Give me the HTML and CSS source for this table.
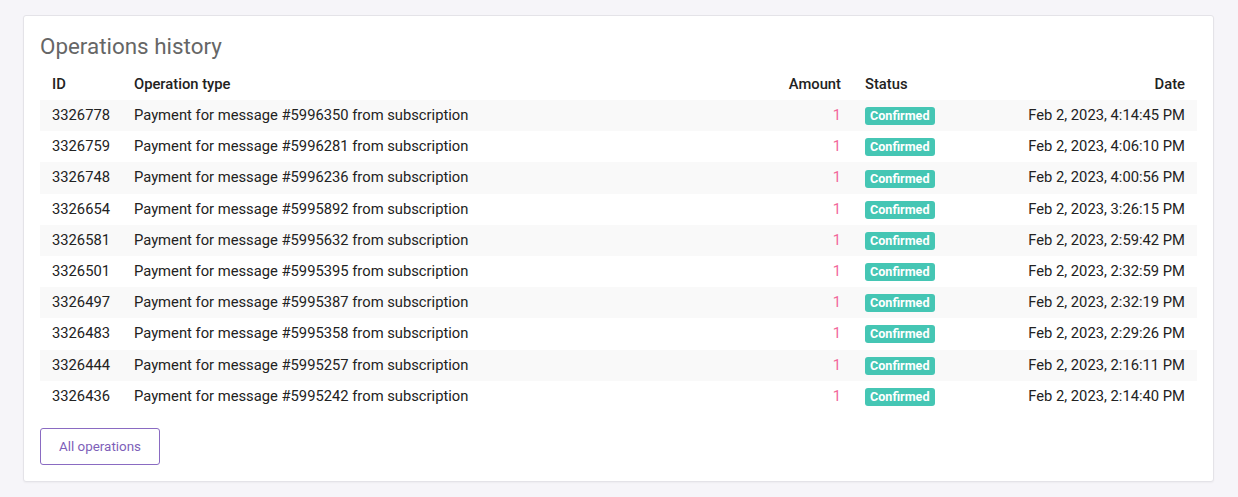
FILE: index.html
```html
<!DOCTYPE html>
<html lang="en">
<head>
<meta charset="utf-8">
<title>Operations history</title>
<link rel="stylesheet" href="styles.css">
</head>
<body>
<div class="card">
  <h2 class="card-title">Operations history</h2>
  <table class="ops">
    <colgroup>
      <col class="c-id"><col class="c-type"><col class="c-amount"><col class="c-status"><col class="c-date">
    </colgroup>
    <thead>
      <tr><th>ID</th><th>Operation type</th><th class="right">Amount</th><th>Status</th><th class="right">Date</th></tr>
    </thead>
    <tbody>
      <tr><td>3326778</td><td>Payment for message #5996350 from subscription</td><td class="right amount">1</td><td><span class="badge">Confirmed</span></td><td class="right">Feb 2, 2023, 4:14:45 PM</td></tr>
      <tr><td>3326759</td><td>Payment for message #5996281 from subscription</td><td class="right amount">1</td><td><span class="badge">Confirmed</span></td><td class="right">Feb 2, 2023, 4:06:10 PM</td></tr>
      <tr><td>3326748</td><td>Payment for message #5996236 from subscription</td><td class="right amount">1</td><td><span class="badge">Confirmed</span></td><td class="right">Feb 2, 2023, 4:00:56 PM</td></tr>
      <tr><td>3326654</td><td>Payment for message #5995892 from subscription</td><td class="right amount">1</td><td><span class="badge">Confirmed</span></td><td class="right">Feb 2, 2023, 3:26:15 PM</td></tr>
      <tr><td>3326581</td><td>Payment for message #5995632 from subscription</td><td class="right amount">1</td><td><span class="badge">Confirmed</span></td><td class="right">Feb 2, 2023, 2:59:42 PM</td></tr>
      <tr><td>3326501</td><td>Payment for message #5995395 from subscription</td><td class="right amount">1</td><td><span class="badge">Confirmed</span></td><td class="right">Feb 2, 2023, 2:32:59 PM</td></tr>
      <tr><td>3326497</td><td>Payment for message #5995387 from subscription</td><td class="right amount">1</td><td><span class="badge">Confirmed</span></td><td class="right">Feb 2, 2023, 2:32:19 PM</td></tr>
      <tr><td>3326483</td><td>Payment for message #5995358 from subscription</td><td class="right amount">1</td><td><span class="badge">Confirmed</span></td><td class="right">Feb 2, 2023, 2:29:26 PM</td></tr>
      <tr><td>3326444</td><td>Payment for message #5995257 from subscription</td><td class="right amount">1</td><td><span class="badge">Confirmed</span></td><td class="right">Feb 2, 2023, 2:16:11 PM</td></tr>
      <tr><td>3326436</td><td>Payment for message #5995242 from subscription</td><td class="right amount">1</td><td><span class="badge">Confirmed</span></td><td class="right">Feb 2, 2023, 2:14:40 PM</td></tr>
    </tbody>
  </table>
  <button class="btn-outline" type="button">All operations</button>
</div>
</body>
</html>
```

FILE: styles.css
```css
* { box-sizing: border-box; }
html, body { height: 100%; }
body {
  margin: 0;
  padding: 15px 24px 0 23px;
  background: #f6f5f9;
  font-family: Roboto, "Liberation Sans", Arial, sans-serif;
  font-size: 14.75px;
  color: #222;
}
.card {
  background: #fff;
  border: 1px solid #e4e3e8;
  border-radius: 3px;
  box-shadow: 0 1px 2px rgba(0,0,0,0.04);
  padding: 16px;
}
.card-title {
  margin: 1px 0 10px 0;
  font-size: 22.4px;
  line-height: 26px;
  font-weight: 400;
  color: #666;
}
.ops {
  width: 100%;
  border-collapse: collapse;
  table-layout: fixed;
}
.c-id { width: 82px; }
.c-amount { width: 100px; }
.c-status { width: 120px; }
.c-date { width: 224px; }
.ops th, .ops td {
  padding: 0 12px 1px 12px;
  height: 31.2px;
  line-height: 20px;
  text-align: left;
  white-space: nowrap;
  vertical-align: middle;
}
.ops th {
  font-weight: 500;
  color: #222;
  height: 31px;
}
.ops tbody tr:nth-child(odd) { background: #f9f9f9; }
.ops .right { text-align: right; }
.amount { color: #f2689a; }
.badge {
  display: inline-block;
  background: #45c6b4;
  color: #fff;
  font-size: 12.6px;
  font-weight: 700;
  line-height: 18px;
  padding: 0 5px;
  border-radius: 3px;
  vertical-align: middle;
}
.btn-outline {
  display: block;
  margin-top: 16px;
  width: 120px;
  height: 37px;
  background: #fff;
  border: 1px solid #8a6bc2;
  border-radius: 3px;
  color: #7e5fb9;
  font-family: Roboto, "Liberation Sans", Arial, sans-serif;
  font-size: 13.4px;
  padding: 0;
  cursor: pointer;
}
```
